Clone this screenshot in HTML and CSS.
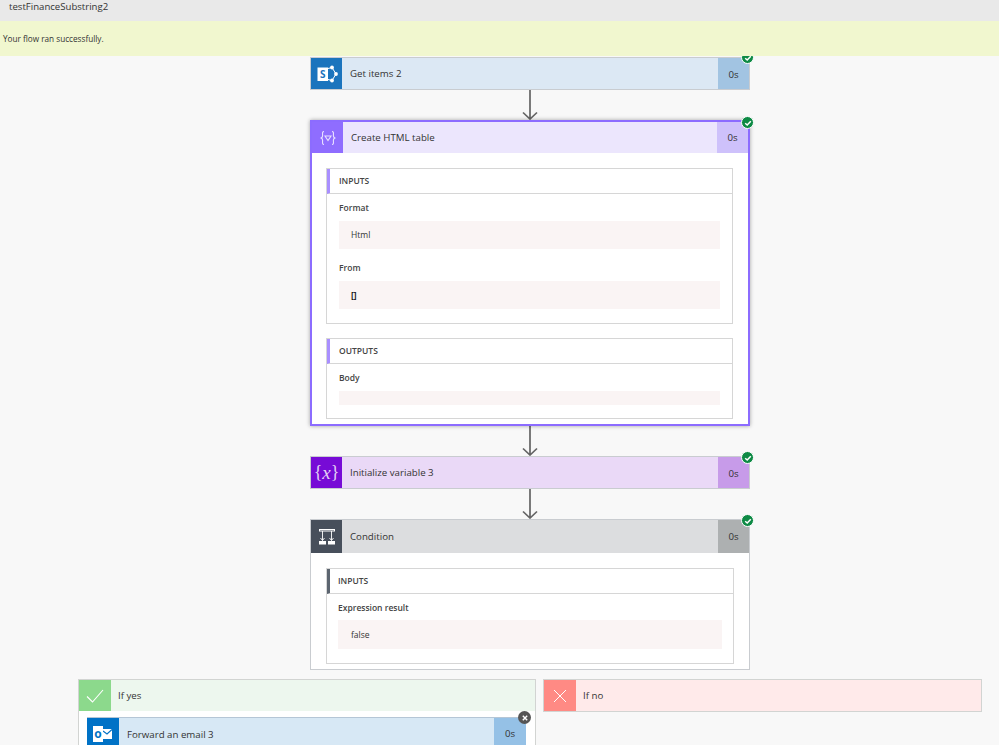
FILE: index.html
```html
<!DOCTYPE html>
<html lang="en">
<head>
  <meta charset="UTF-8">
  <title>testFinanceSubstring2</title>
  <link rel="stylesheet" href="styles.css">
</head>
<body>
  <header class="topbar">testFinanceSubstring2</header>
  <div class="banner">Your flow ran successfully.</div>

  <main class="canvas">
    <section class="card card-sharepoint">
      <div class="card-head">
        <div class="card-icon">
          <svg width="22" height="22" viewBox="0 0 22 22">
            <path d="M12 5.5 L16 4.5 L20 11 L16 17.5 L12 16.5" fill="none" stroke="#fff" stroke-width="1"/>
            <circle cx="16" cy="4.5" r="1.9" fill="#fff"/>
            <circle cx="20" cy="11" r="1.9" fill="#fff"/>
            <circle cx="16" cy="17.5" r="1.9" fill="#fff"/>
            <rect x="1.5" y="4.5" width="10.5" height="13.5" fill="#fff"/>
            <text x="6.8" y="15" class="icon-letter">S</text>
          </svg>
        </div>
        <div class="card-title">Get items 2</div>
        <div class="card-time">0s</div>
      </div>
      <span class="check"><svg width="8" height="8" viewBox="0 0 8 8"><path d="M1.2 4.2 L3.2 6 L6.8 2.2" fill="none" stroke="#fff" stroke-width="1.5"/></svg></span>
    </section>

    <svg class="arrow" width="20" height="30" viewBox="0 0 20 30"><path d="M10 0 V29 M3 22.5 L10 29 L17 22.5" fill="none" stroke="#646464" stroke-width="1.7"/></svg>

    <section class="card card-table">
      <div class="card-head">
        <div class="card-icon">
          <svg width="20" height="20" viewBox="0 0 20 20">
            <path d="M6 3.5 C4 3.5 4.6 5.5 4.6 7.5 C4.6 9 4 10 2.5 10 C4 10 4.6 11 4.6 12.5 C4.6 14.5 4 16.5 6 16.5 M14 3.5 C16 3.5 15.4 5.5 15.4 7.5 C15.4 9 16 10 17.5 10 C16 10 15.4 11 15.4 12.5 C15.4 14.5 16 16.5 14 16.5" fill="none" stroke="#e9e1ff" stroke-width="1.1"/>
            <path d="M7 8 H13 L10 12.5 Z" fill="none" stroke="#e9e1ff" stroke-width="1.1"/>
          </svg>
        </div>
        <div class="card-title">Create HTML table</div>
        <div class="card-time">0s</div>
      </div>
      <span class="check"><svg width="8" height="8" viewBox="0 0 8 8"><path d="M1.2 4.2 L3.2 6 L6.8 2.2" fill="none" stroke="#fff" stroke-width="1.5"/></svg></span>
      <div class="card-body">
        <div class="box">
          <div class="box-head">INPUTS</div>
          <div class="box-body">
            <div class="field">
              <div class="field-label">Format</div>
              <div class="field-value">Html</div>
            </div>
            <div class="field">
              <div class="field-label">From</div>
              <div class="field-value field-code">[]</div>
            </div>
          </div>
        </div>
        <div class="box">
          <div class="box-head">OUTPUTS</div>
          <div class="box-body box-body-short">
            <div class="field">
              <div class="field-label">Body</div>
              <div class="field-value field-empty"></div>
            </div>
          </div>
        </div>
      </div>
    </section>

    <svg class="arrow" width="20" height="30" viewBox="0 0 20 30"><path d="M10 0 V29 M3 22.5 L10 29 L17 22.5" fill="none" stroke="#646464" stroke-width="1.7"/></svg>

    <section class="card card-variable">
      <div class="card-head">
        <div class="card-icon card-icon-var">{<i>x</i>}</div>
        <div class="card-title">Initialize variable 3</div>
        <div class="card-time">0s</div>
      </div>
      <span class="check"><svg width="8" height="8" viewBox="0 0 8 8"><path d="M1.2 4.2 L3.2 6 L6.8 2.2" fill="none" stroke="#fff" stroke-width="1.5"/></svg></span>
    </section>

    <svg class="arrow" width="20" height="30" viewBox="0 0 20 30"><path d="M10 0 V29 M3 22.5 L10 29 L17 22.5" fill="none" stroke="#646464" stroke-width="1.7"/></svg>

    <section class="card card-condition">
      <div class="card-head">
        <div class="card-icon">
          <svg width="20" height="20" viewBox="0 0 20 20">
            <rect x="2.5" y="2.5" width="15" height="1.5" fill="none" stroke="#fff" stroke-width="1"/>
            <path d="M5.5 4 V13.5 M14.5 4 V13.5 M3.5 11 L5.5 13.5 L7.5 11 M12.5 11 L14.5 13.5 L16.5 11" fill="none" stroke="#fff" stroke-width=".9"/>
            <rect x="2" y="14" width="7" height="3.5" fill="#fff"/>
            <rect x="11" y="14" width="7" height="3.5" fill="#fff"/>
          </svg>
        </div>
        <div class="card-title">Condition</div>
        <div class="card-time">0s</div>
      </div>
      <span class="check"><svg width="8" height="8" viewBox="0 0 8 8"><path d="M1.2 4.2 L3.2 6 L6.8 2.2" fill="none" stroke="#fff" stroke-width="1.5"/></svg></span>
      <div class="card-body">
        <div class="box">
          <div class="box-head">INPUTS</div>
          <div class="box-body">
            <div class="field">
              <div class="field-label">Expression result</div>
              <div class="field-value">false</div>
            </div>
          </div>
        </div>
      </div>
    </section>

    <div class="branches">
      <section class="branch branch-yes">
        <div class="branch-head">
          <div class="branch-icon">
            <svg width="18" height="14" viewBox="0 0 18 14"><path d="M1 7.5 L6.5 13 L17 1" fill="none" stroke="#fff" stroke-width="1.1"/></svg>
          </div>
          <div class="card-title">If yes</div>
        </div>
        <div class="branch-body">
          <section class="card card-outlook">
            <div class="card-head">
              <div class="card-icon">
                <svg width="22" height="22" viewBox="0 0 22 22">
                  <rect x="11" y="6" width="9" height="10" fill="#fff"/>
                  <path d="M11 8 L15 11 L20 6.5" fill="none" stroke="#0072c6" stroke-width="1.1"/>
                  <rect x="1" y="3" width="10" height="16" fill="#fff"/>
                  <text x="6" y="14.5" class="icon-letter icon-letter-blue">o</text>
                </svg>
              </div>
              <div class="card-title">Forward an email 3</div>
              <div class="card-time">0s</div>
            </div>
            <span class="close-badge"><svg width="6" height="6" viewBox="0 0 6 6"><path d="M.8 .8 L5.2 5.2 M5.2 .8 L.8 5.2" stroke="#fff" stroke-width="1.4"/></svg></span>
          </section>
        </div>
      </section>

      <section class="branch branch-no">
        <div class="branch-head">
          <div class="branch-icon">
            <svg width="14" height="14" viewBox="0 0 14 14"><path d="M1 1 L13 13 M13 1 L1 13" fill="none" stroke="#fff" stroke-width="1"/></svg>
          </div>
          <div class="card-title">If no</div>
        </div>
      </section>
    </div>
  </main>
</body>
</html>
```

FILE: styles.css
```css
html,
body {
  margin: 0;
  padding: 0;
  height: 745px;
  overflow: hidden;
}

body {
  font-family: 'Open Sans', 'Noto Sans', Arial, sans-serif;
  font-size: 9.7px;
  color: #333;
  background-color: #f8f8f8;
}

.topbar {
  height: 21px;
  line-height: 14px;
  padding-left: 9px;
  font-size: 9.6px;
  background-color: #e9e9e9;
}

.banner {
  position: relative;
  z-index: 2;
  height: 35px;
  line-height: 35px;
  padding-left: 3px;
  font-size: 8.2px;
  background-color: #f1f7cf;
}

.canvas {
  display: flex;
  flex-direction: column;
  align-items: center;
  padding: 1px 0 0 61px;
}

.arrow {
  display: block;
  flex: none;
}

/* cards */
.card {
  position: relative;
  flex: none;
  box-sizing: border-box;
  width: 440px;
  background-color: #fff;
  border: 1px solid #c9ccd0;
}

.card-head {
  display: flex;
  align-items: stretch;
  height: 31px;
}

.card-icon {
  display: flex;
  align-items: center;
  justify-content: center;
  flex: none;
  width: 31px;
  margin-right: 1px;
}

.card-title {
  flex: 1;
  align-self: center;
  padding: 0 0 1px 7px;
}

.card-time {
  flex: none;
  width: 31px;
  line-height: 31px;
  text-align: center;
}

.card-body {
  padding: 15px 15px 6px;
}

.icon-letter {
  font-family: 'Open Sans', Arial, sans-serif;
  font-size: 10px;
  font-weight: 700;
  text-anchor: middle;
  fill: #1b74bd;
}

.icon-letter-blue {
  font-size: 12px;
  fill: #0072c6;
}

.card-icon-var {
  font-family: 'Liberation Serif', serif;
  font-size: 18px;
  color: #e4d2f5;
}

.card-icon-var i {
  font-size: 19px;
}

.check {
  position: absolute;
  top: -6px;
  right: -5px;
  display: flex;
  align-items: center;
  justify-content: center;
  box-sizing: border-box;
  width: 13px;
  height: 13px;
  border: 1px solid #fff;
  border-radius: 50%;
  background-color: #0e8a45;
}

.close-badge {
  position: absolute;
  top: -7px;
  right: -5px;
  display: flex;
  align-items: center;
  justify-content: center;
  width: 13px;
  height: 13px;
  border-radius: 50%;
  background-color: #555;
}

/* card colours */
.card-sharepoint {
  height: 33px;
}

.card-sharepoint .check {
  top: -7px;
}

.card-sharepoint .card-head {
  background-color: #dce8f4;
}

.card-sharepoint .card-title,
.card-variable .card-title,
.card-outlook .card-title {
  padding-bottom: 0;
}

.card-sharepoint .card-icon {
  background-color: #1b74bd;
}

.card-sharepoint .card-time,
.card-variable .card-time {
  padding-top: 1px;
}

.card-sharepoint .card-time {
  background-color: #a2c4e2;
}

.card-table {
  height: 306px;
  border: 2px solid #8c6cff;
  box-shadow: 0 0 4px rgba(0, 0, 0, 0.35);
}

.card-table .check {
  right: -6px;
}

.card-table .card-body {
  padding-left: 14px;
}

.card-table .card-head {
  background-color: #ece6fd;
}

.card-table .card-icon {
  background-color: #8f6dff;
}

.card-table .card-time {
  background-color: #cec1fb;
}

.card-table .box-head {
  border-left-color: #a98fff;
}

.card-variable {
  height: 33px;
}

.card-variable .card-head {
  background-color: #ead9f7;
}

.card-variable .card-icon {
  background-color: #770bd6;
}

.card-variable .card-time {
  background-color: #c79be9;
}

.card-condition {
  height: 151px;
}

.card-condition .card-head {
  height: 33px;
  background-color: #dcdddf;
}

.card-condition .card-icon {
  background-color: #474f5b;
}

.card-condition .card-time {
  line-height: 33px;
  background-color: #adb0b1;
}

.card-condition .box-head {
  padding-left: 8px;
  border-left-color: #5c6570;
}

.card-condition .box-body {
  padding: 0 11px 14px;
}

.card-condition .field-value {
  height: 29px;
  line-height: 29px;
  margin-top: 5px;
  padding-left: 13px;
}

.card-outlook {
  width: 439px;
  border: none;
  border-top: 1px solid #b5c6d6;
}

.card-outlook .card-head {
  height: 32px;
  background-color: #d7e8f5;
}

.card-outlook .card-icon {
  width: 32px;
  background-color: #0072c6;
}

.card-outlook .card-time {
  width: 32px;
  line-height: 32px;
  background-color: #95c1e6;
}

/* inputs and outputs */
.box {
  border: 1px solid #d6d6d6;
  margin-bottom: 14px;
}

.box:last-child {
  margin-bottom: 0;
}

.box-head {
  height: 24px;
  line-height: 24px;
  padding-left: 9px;
  font-size: 8.5px;
  font-weight: 600;
  color: #444;
  border-left: 3px solid #999;
  border-bottom: 1px solid #d6d6d6;
}

.box-body {
  padding: 0 12px 14px;
}

.box-body-short {
  padding-bottom: 13px;
}

.field {
  margin-top: 12px;
}

.field:first-child {
  margin-top: 7px;
}

.field-label {
  height: 14px;
  line-height: 14px;
  font-size: 8.5px;
  font-weight: 600;
  color: #444;
}

.field-value {
  height: 28px;
  line-height: 28px;
  margin-top: 6px;
  padding-left: 12px;
  font-size: 8.5px;
  background-color: #faf4f4;
}

.field-code {
  font-weight: 700;
  color: #222;
}

.field-empty {
  height: 14px;
}

/* branches */
.branches {
  display: flex;
  gap: 7px;
  flex: none;
  margin-top: 9px;
}

.branch {
  box-sizing: border-box;
  width: 458px;
  background-color: #fff;
  border: 1px solid #d2d4d2;
}

.branch-no {
  width: 439px;
  height: 33px;
}

.branch-head {
  display: flex;
  height: 31px;
}

.branch-icon {
  display: flex;
  align-items: center;
  justify-content: center;
  width: 32px;
}

.branch-yes .branch-head {
  background-color: #edf7ee;
}

.branch-yes .branch-icon {
  background-color: #8cd98c;
}

.branch-no .branch-head {
  background-color: #ffeaea;
}

.branch-no .branch-icon {
  background-color: #ff8a84;
}

.branch-body {
  padding: 6px 10px 10px 8px;
}
```
